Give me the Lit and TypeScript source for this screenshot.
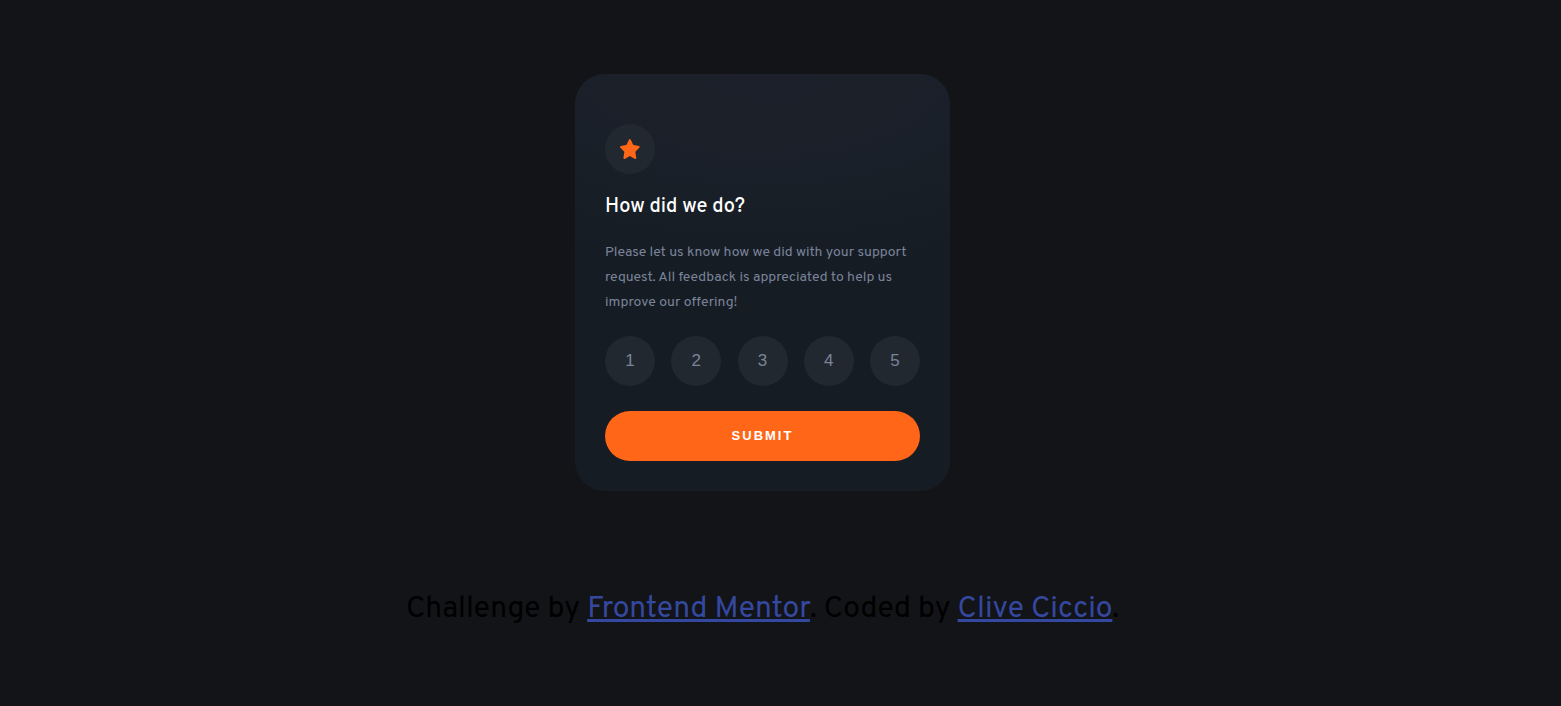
import { LitElement, html, css } from "lit";
import { customElement, state } from "lit/decorators.js";

@customElement("rating-card")
export class RatingCard extends LitElement {
  @state() private rating = 0;

  static styles = css`
    :host {
      display: block;
      width: 100%;
      max-width: 375px;
    }
    .card {
      box-sizing: border-box;
      padding: 50px 30px 30px;
      border-radius: 30px;
      background: radial-gradient(ellipse 120% 50% at 50% 0, #1d202a 0%, #1a2029 45%, #161c23 100%);
    }
    .badge {
      display: flex;
      align-items: center;
      justify-content: center;
      width: 50px;
      height: 50px;
      border-radius: 50%;
      background: #22282f;
    }
    .star {
      display: block;
      width: 20px;
      height: 20px;
    }
    .title {
      margin: 21px 0;
      color: #fff;
      font-size: 20px;
      font-weight: 500;
      line-height: 24px;
    }
    .copy {
      margin: 0;
      color: #7a849a;
      font-size: 14px;
      line-height: 25px;
    }
    .scores {
      display: flex;
      justify-content: space-between;
      margin: 21px 0 25px;
    }
    .score {
      width: 50px;
      height: 50px;
      padding: 0;
      border: 0;
      border-radius: 50%;
      background: #22282f;
      color: #7a849a;
      font: 17px "Liberation Sans", Arial, sans-serif;
      cursor: pointer;
    }
    .score[aria-pressed="true"] {
      background: #7a849a;
      color: #fff;
    }
    .submit {
      display: block;
      width: 100%;
      height: 50px;
      padding: 0 0 2px;
      border: 0;
      border-radius: 25px;
      background: #ff6618;
      color: #fff;
      font: bold 13px "Liberation Sans", Arial, sans-serif;
      letter-spacing: 2px;
      text-transform: uppercase;
      cursor: pointer;
    }
  `;

  render() {
    return html`
      <main class="card">
        <div class="badge">
          <svg class="star" viewBox="0 0 17 16" preserveAspectRatio="none" aria-hidden="true">
            <path
              fill="#ff6618"
              d="m9.067.43 1.99 4.031c.112.228.33.386.58.422l4.45.647a.772.772 0 0 1 .427 1.316l-3.22 3.138a.773.773 0 0 0-.222.683l.76 4.431a.772.772 0 0 1-1.12.813l-3.98-2.092a.773.773 0 0 0-.718 0l-3.98 2.092a.772.772 0 0 1-1.119-.813l.76-4.431a.77.77 0 0 0-.222-.683L.233 6.846A.772.772 0 0 1 .661 5.53l4.449-.647a.772.772 0 0 0 .58-.422L7.68.43a.774.774 0 0 1 1.387 0Z"
            />
          </svg>
        </div>
        <h1 class="title">How did we do?</h1>
        <p class="copy">
          Please let us know how we did with your support request. All feedback
          is appreciated to help us improve our offering!
        </p>
        <div class="scores">
          ${[1, 2, 3, 4, 5].map(
            (n) => html`<button
              class="score"
              type="button"
              aria-pressed=${this.rating === n ? "true" : "false"}
              @click=${() => (this.rating = n)}
            >${n}</button>`
          )}
        </div>
        <button class="submit" type="button">Submit</button>
      </main>
    `;
  }
}

@customElement("app-root")
export class AppRoot extends LitElement {
  static styles = css`
    :host {
      display: block;
      box-sizing: border-box;
      min-height: 100vh;
      padding: 74px 36px 78px 0;
      background: #131417;
      font-family: Overpass, Roboto, sans-serif;
    }
    .page {
      display: flex;
      flex-direction: column;
      align-items: center;
      gap: 100px;
    }
    .credit {
      color: #000;
      font-size: 30px;
      line-height: 38px;
      text-align: center;
    }
    .link {
      color: #3448a0;
      text-decoration: underline;
      text-decoration-thickness: 3px;
      text-underline-offset: 2px;
    }
  `;

  render() {
    return html`
      <div class="page">
        <rating-card></rating-card>
        <footer class="credit">
          Challenge by <a class="link" href="#frontend-mentor">Frontend Mentor</a>.
          Coded by <a class="link" href="#clive-ciccio">Clive Ciccio</a>.
        </footer>
      </div>
    `;
  }
}
